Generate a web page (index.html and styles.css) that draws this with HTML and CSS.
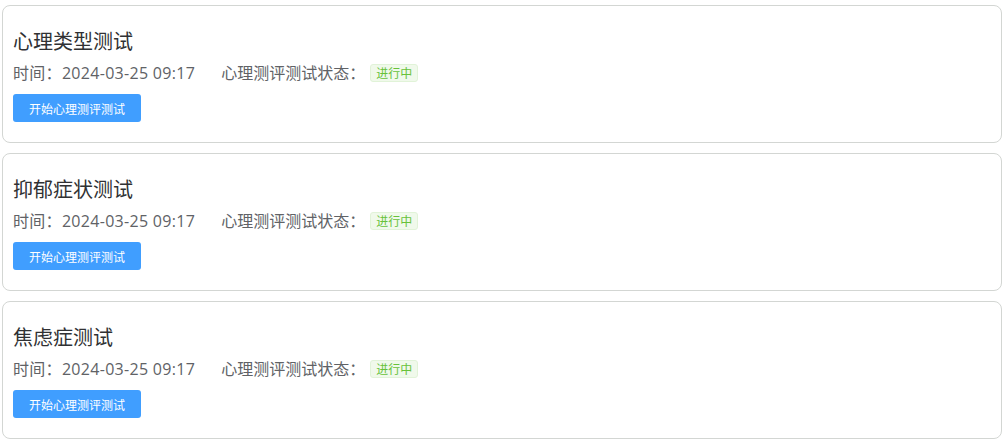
FILE: index.html
```html
<!DOCTYPE html>
<html lang="zh-CN">
<head>
  <meta charset="UTF-8" />
  <title>心理测评</title>
  <link rel="stylesheet" href="styles.css">
</head>
<body>
  <div class="list">
    <div class="card">
      <h3 class="title">心理类型测试</h3>
      <div class="meta">
        <span class="time">时间：2024-03-25 09:17</span>
        <span class="status">心理测评测试状态：</span>
        <span class="tag">进行中</span>
      </div>
      <button class="btn">开始心理测评测试</button>
    </div>
    <div class="card">
      <h3 class="title">抑郁症状测试</h3>
      <div class="meta">
        <span class="time">时间：2024-03-25 09:17</span>
        <span class="status">心理测评测试状态：</span>
        <span class="tag">进行中</span>
      </div>
      <button class="btn">开始心理测评测试</button>
    </div>
    <div class="card">
      <h3 class="title">焦虑症测试</h3>
      <div class="meta">
        <span class="time">时间：2024-03-25 09:17</span>
        <span class="status">心理测评测试状态：</span>
        <span class="tag">进行中</span>
      </div>
      <button class="btn">开始心理测评测试</button>
    </div>
  </div>
</body>
</html>
```

FILE: styles.css
```css
body {
  margin: 0;
  padding: 5px 4px 0 2px;
  background: #fff;
  font-family: "Noto Sans CJK SC", "Liberation Sans", sans-serif;
}

.list {
  display: flex;
  flex-direction: column;
  gap: 10px;
}

.card {
  border: 1px solid #d3d6d3;
  border-radius: 8px;
  padding: 20px 10px;
  display: flex;
  flex-direction: column;
  align-items: flex-start;
}

.title {
  margin: 0;
  font-size: 20px;
  font-weight: normal;
  line-height: 30px;
  color: #303133;
}

.meta {
  margin-top: 5px;
  display: flex;
  align-items: center;
  font-family: "Open Sans", "Noto Sans CJK SC", sans-serif;
  font-size: 16px;
  line-height: 24px;
  color: #606266;
}

.time {
  letter-spacing: 0.3px;
}

.status {
  margin-left: 26px;
}

.tag {
  margin-left: 5px;
  height: 18px;
  line-height: 16px;
  padding: 0 5px;
  font-family: "Noto Sans CJK SC", sans-serif;
  font-size: 12px;
  color: #67c23a;
  background: #f0f9eb;
  border: 1px solid #e1f3d8;
  border-radius: 3px;
  box-sizing: border-box;
}

.btn {
  margin-top: 9px;
  width: 128px;
  height: 28px;
  border: none;
  border-radius: 3px;
  background: #409eff;
  color: #fff;
  font-family: inherit;
  font-size: 12px;
  padding: 0;
}
```
